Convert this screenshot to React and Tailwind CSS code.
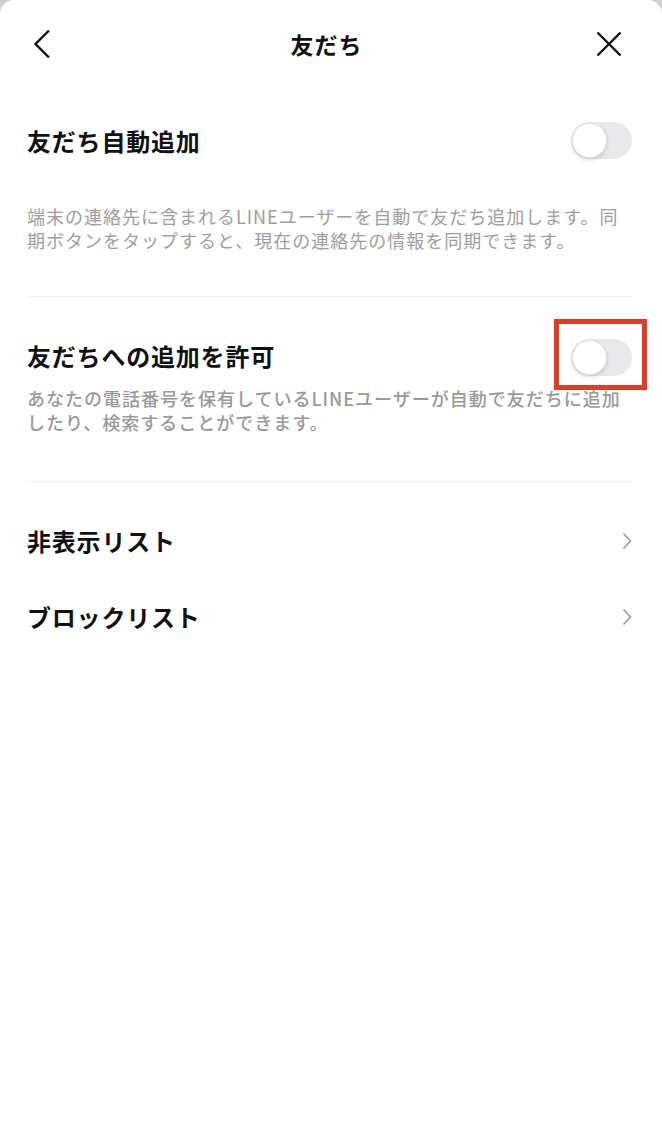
const font = { fontFamily: '"Noto Sans CJK JP", "Noto Sans", sans-serif' };

function Toggle() {
  return (
    <div className="relative h-[37px] w-[61px] rounded-full bg-[#e9e9eb]">
      <div className="absolute left-[1px] top-[1px] h-[35px] w-[35px] rounded-full border border-[#e3e3e3] bg-white shadow-[0_2px_4px_rgba(0,0,0,0.15)]" />
    </div>
  );
}

function Chevron() {
  return (
    <svg width="10" height="18" viewBox="0 0 10 18" fill="none">
      <path d="M1.5 1.5 L8.5 9 L1.5 16.5" stroke="#9a9a9a" strokeWidth="1.6" />
    </svg>
  );
}

export default function App() {
  return (
    <div className="min-h-[1136px] w-[662px] bg-[#cfcfcf]" style={font}>
      <div className="min-h-[1136px] w-[662px] rounded-t-[14px] bg-white">
        <header className="flex h-[88px] items-center justify-between pl-[33px] pr-[40px]">
          <svg width="18" height="30" viewBox="0 0 18 30" fill="none">
            <path d="M16 1.5 L2.5 15 L16 28.5" stroke="#111" strokeWidth="2.4" />
          </svg>
          <h1 className="pl-[6px] text-[23px] font-bold tracking-[1px] text-[#111]">友だち</h1>
          <svg width="26" height="26" viewBox="0 0 26 26" fill="none">
            <path d="M1.5 1.5 L24.5 24.5 M24.5 1.5 L1.5 24.5" stroke="#111" strokeWidth="2.4" />
          </svg>
        </header>

        <div className="pl-[27px] pr-[30px]">
          <section className="border-b border-[#f0f0f0] pb-[44px] pt-[34px]">
            <div className="flex items-center justify-between">
              <h2 className="text-[24px] font-bold leading-[36px] tracking-[0.8px] text-[#111]">友だち自動追加</h2>
              <Toggle />
            </div>
            <p className="mt-[45px] text-[18px] leading-[24px] tracking-[1px] text-[#9e9e9e]">
              端末の連絡先に含まれるLINEユーザーを自動で友だち追加します。同期ボタンをタップすると、現在の連絡先の情報を同期できます。
            </p>
          </section>

          <section className="border-b border-[#f0f0f0] pb-[47px] pt-[40px]">
            <div className="flex items-center justify-between">
              <h2 className="text-[24px] font-bold leading-[36px] tracking-[0.8px] text-[#111]">友だちへの追加を許可</h2>
              <div className="relative translate-y-[2px]">
                <Toggle />
                <div className="absolute -left-[17px] -top-[20px] h-[71px] w-[93px] border-[5px] border-[#d9402a]" />
              </div>
            </div>
            <p className="mt-[12px] text-[18px] font-medium leading-[24px] tracking-[1px] text-[#999]">
              あなたの電話番号を保有しているLINEユーザーが自動で友だちに追加したり、検索することができます。
            </p>
          </section>

          <div className="pt-[41px]">
            <div className="flex h-[36px] items-center justify-between">
              <span className="text-[24px] font-bold tracking-[0.8px] text-[#111]">非表示リスト</span>
              <Chevron />
            </div>
            <div className="mt-[40px] flex h-[36px] items-center justify-between">
              <span className="text-[24px] font-bold tracking-[0.8px] text-[#111]">ブロックリスト</span>
              <Chevron />
            </div>
          </div>
        </div>
      </div>
    </div>
  );
}
